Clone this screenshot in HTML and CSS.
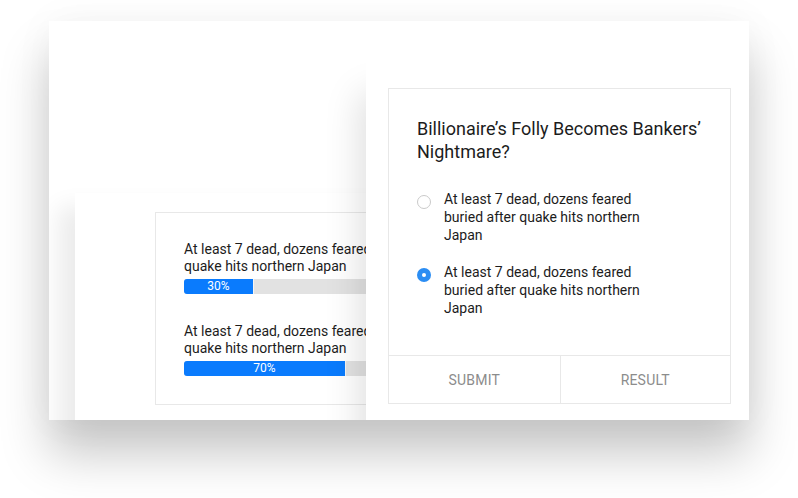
FILE: index.html
```html
<!DOCTYPE html>
<html lang="en">
<head>
    <meta charset="UTF-8">
    <meta name="viewport" content="width=device-width, initial-scale=1.0">
    <title>Poll Preview</title>
    <link rel="stylesheet" href="styles.css">
</head>
<body>

    <div class="stage">

        <!-- Result panel, behind -->
        <div class="back-panel">
            <div class="result-card">
                <div class="result-item">
                    <p class="result-text">At least 7 dead, dozens feared buried after quake hits northern Japan</p>
                    <div class="bar">
                        <div class="bar-fill" style="width: 30%">30%</div>
                    </div>
                </div>
                <div class="result-item">
                    <p class="result-text">At least 7 dead, dozens feared buried after quake hits northern Japan</p>
                    <div class="bar">
                        <div class="bar-fill" style="width: 70%">70%</div>
                    </div>
                </div>
            </div>
        </div>

        <!-- Question panel, in front -->
        <div class="front-panel">
            <div class="question-card">
                <div class="question-body">
                    <h2 class="question-title">Billionaire’s Folly Becomes Bankers’ Nightmare?</h2>
                    <label class="option">
                        <span class="radio"></span>
                        <span class="option-text">At least 7 dead, dozens feared buried after quake hits northern Japan</span>
                    </label>
                    <label class="option">
                        <span class="radio checked"></span>
                        <span class="option-text">At least 7 dead, dozens feared buried after quake hits northern Japan</span>
                    </label>
                </div>
                <div class="question-footer">
                    <button class="footer-btn">Submit</button>
                    <button class="footer-btn">Result</button>
                </div>
            </div>
        </div>

    </div>

</body>
</html>
```

FILE: styles.css
```css
html {
    height: 100%;
}

body {
    font-family: Roboto, "Liberation Sans", Arial, sans-serif;
    background-color: #ffffff;
    color: #212121;
    margin: 0;
    padding: 21px 0 0 49px;
    min-height: 100%;
    box-sizing: border-box;
}

/* Big white canvas */
.stage {
    position: relative;
    width: 700px;
    height: 399px;
    background-color: #ffffff;
    overflow: hidden;
    box-shadow: 0 34px 46px rgba(0, 0, 0, 0.22), 0 0 40px rgba(0, 0, 0, 0.04);
}

/* Back layer with the results */
.back-panel {
    position: absolute;
    left: 26px;
    top: 172px;
    width: 674px;
    height: 260px;
    padding: 19px 0 0 80px;
    box-sizing: border-box;
    background-color: #ffffff;
    box-shadow: -16px 14px 22px rgba(0, 0, 0, 0.08);
}

.result-card {
    width: 420px;
    padding: 28px 0 28px 28px;
    border: 1px solid #e8e8e8;
}

.result-item + .result-item {
    margin-top: 29px;
}

.result-text {
    margin: 0;
    width: 300px;
    font-size: 14px;
    line-height: 17px;
    color: #1c1c1c;
}

.bar {
    width: 230px;
    height: 15px;
    margin-top: 4px;
    background-color: #e2e2e2;
    border-radius: 3px;
    overflow: hidden;
}

.bar-fill {
    height: 15px;
    background-color: #0a7bfd;
    border-right: 1px solid #f4f4f4;
    color: #ffffff;
    font-size: 12px;
    line-height: 15px;
    text-align: center;
}

/* Front layer with the question */
.front-panel {
    position: absolute;
    left: 317px;
    top: 0;
    width: 383px;
    height: 420px;
    padding: 67px 18px 0 22px;
    box-sizing: border-box;
    background-color: #ffffff;
    box-shadow: -18px 60px 34px -12px rgba(0, 0, 0, 0.13);
}

.question-card {
    height: 316px;
    box-sizing: border-box;
    border: 1px solid #e8e8e8;
    display: flex;
    flex-direction: column;
}

.question-body {
    padding: 28px 28px 0;
}

.question-title {
    margin: 0 0 27px;
    font-size: 18px;
    line-height: 23px;
    font-weight: 400;
    color: #1c1c1c;
}

.option {
    display: flex;
    gap: 13px;
}

.option + .option {
    margin-top: 19px;
}

.radio {
    flex: none;
    width: 14px;
    height: 14px;
    margin-top: 5px;
    box-sizing: border-box;
    border: 1.5px solid #cacaca;
    border-radius: 50%;
}

.radio.checked {
    border: none;
    background-color: #2b8df3;
    display: flex;
    align-items: center;
    justify-content: center;
}

.radio.checked::after {
    content: "";
    width: 4px;
    height: 4px;
    border-radius: 50%;
    background-color: #ffffff;
}

.option-text {
    width: 200px;
    font-size: 14px;
    line-height: 18px;
    color: #1c1c1c;
}

.question-footer {
    margin-top: auto;
    height: 47px;
    border-top: 1px solid #e8e8e8;
    display: grid;
    grid-template-columns: 1fr 1fr;
}

.footer-btn {
    font-family: inherit;
    background: none;
    border: none;
    font-size: 14px;
    letter-spacing: 0.2px;
    text-transform: uppercase;
    color: #8c8c8c;
    cursor: pointer;
}

.footer-btn + .footer-btn {
    border-left: 1px solid #e8e8e8;
}
```
